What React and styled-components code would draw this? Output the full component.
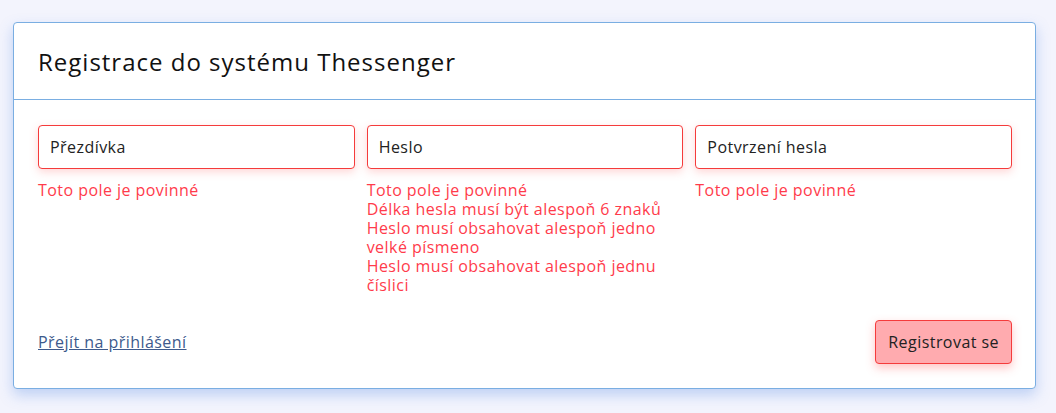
import React from 'react';
import styled, { createGlobalStyle } from 'styled-components';

const GlobalStyle = createGlobalStyle`
  body {
    margin: 0;
    background: #f3f4fd;
    font-family: "Open Sans", "Liberation Sans", sans-serif;
  }
`;

const Page = styled.div`
  padding: 22px 20px 24px 13px;
`;

const Card = styled.div`
  background: #fff;
  border: 1px solid #7aaee2;
  border-radius: 4px;
  box-shadow: 0 6px 14px rgba(90, 140, 230, 0.35);
`;

const Header = styled.div`
  height: 76px;
  display: flex;
  align-items: center;
  padding: 0 24px;
  border-bottom: 1px solid #7aaee2;
`;

const Title = styled.h1`
  margin: 0;
  font-size: 24px;
  font-weight: 400;
  letter-spacing: 1px;
  color: #111;
`;

const Body = styled.div`
  padding: 25px 23px 24px 24px;
  letter-spacing: 0.45px;
`;

const Fields = styled.div`
  display: grid;
  grid-template-columns: repeat(3, 1fr);
  gap: 12px;
`;

const Field = styled.div`
  display: flex;
  flex-direction: column;
`;

const Input = styled.input`
  box-sizing: border-box;
  height: 44px;
  width: 100%;
  padding: 0 11px;
  border: 1px solid #f53b3b;
  border-radius: 4px;
  font: inherit;
  font-size: 16px;
  letter-spacing: 0.45px;
  color: #222;
  outline: none;
  box-shadow: 0 3px 8px rgba(255, 90, 90, 0.25);
  &::placeholder { color: #222; }
`;

const Errors = styled.div`
  margin-top: 12px;
  color: #ff3b4b;
  font-size: 16px;
  line-height: 19px;
`;

const Footer = styled.div`
  margin-top: 25px;
  display: flex;
  justify-content: space-between;
  align-items: center;
`;

const Link = styled.a`
  color: #3d5a8c;
  font-size: 16px;
  text-decoration: underline;
  cursor: pointer;
`;

const Button = styled.button`
  height: 44px;
  padding: 0 12px;
  background: #ffabaf;
  border: 1px solid #f53b3b;
  border-radius: 4px;
  font: inherit;
  font-size: 16px;
  letter-spacing: 0.45px;
  color: #222;
  box-shadow: 0 4px 10px rgba(255, 90, 90, 0.35);
  cursor: pointer;
`;

const fields = [
  { placeholder: 'Přezdívka', type: 'text', errors: ['Toto pole je povinné'] },
  {
    placeholder: 'Heslo',
    type: 'password',
    errors: [
      'Toto pole je povinné',
      'Délka hesla musí být alespoň 6 znaků',
      'Heslo musí obsahovat alespoň jedno velké písmeno',
      'Heslo musí obsahovat alespoň jednu číslici',
    ],
  },
  { placeholder: 'Potvrzení hesla', type: 'password', errors: ['Toto pole je povinné'] },
];

export default function App() {
  return (
    <>
      <GlobalStyle />
      <Page>
        <Card>
          <Header>
            <Title>Registrace do systému Thessenger</Title>
          </Header>
          <Body>
            <Fields>
              {fields.map(f => (
                <Field key={f.placeholder}>
                  <Input type={f.type} placeholder={f.placeholder} />
                  <Errors>
                    {f.errors.map(e => <div key={e}>{e}</div>)}
                  </Errors>
                </Field>
              ))}
            </Fields>
            <Footer>
              <Link>Přejít na přihlášení</Link>
              <Button>Registrovat se</Button>
            </Footer>
          </Body>
        </Card>
      </Page>
    </>
  );
}
